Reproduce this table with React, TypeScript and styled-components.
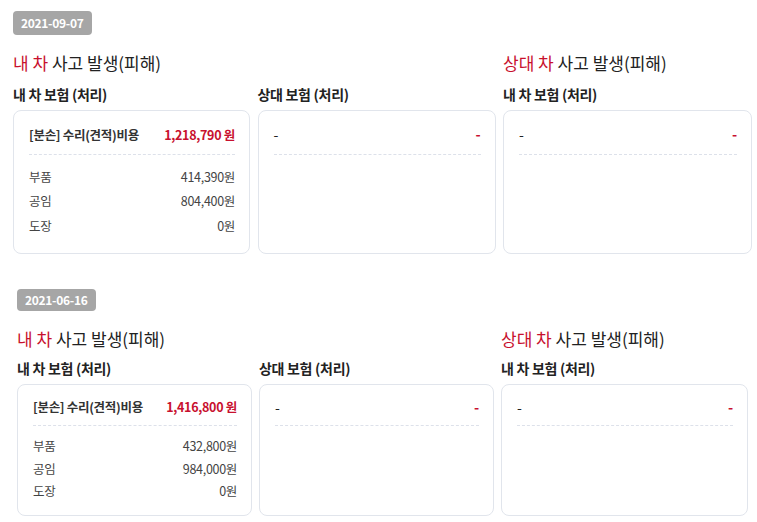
import styled, { createGlobalStyle } from "styled-components";

const GlobalStyle = createGlobalStyle`
  html, body {
    margin: 0;
    padding: 0;
    background: #ffffff;
  }
  body {
    font-family: "Noto Sans CJK KR", "Noto Sans", sans-serif;
    color: #222222;
  }
`;

const RED = "#c8102e";

const Page = styled.div`
  display: flex;
  flex-direction: column;
  gap: 35px;
  padding: 11px 0 0;
`;

const Section = styled.section<{ $left: number }>`
  display: flex;
  flex-direction: column;
  align-items: flex-start;
  padding-left: ${(p) => p.$left}px;
`;

const DateBadge = styled.div<{ $compact?: boolean }>`
  height: ${(p) => (p.$compact ? 22 : 24)}px;
  line-height: ${(p) => (p.$compact ? 22 : 24)}px;
  padding: 0 8px;
  border-radius: 4px;
  background-color: #a6a6a6;
  color: #ffffff;
  font-size: 12px;
  font-weight: bold;
  letter-spacing: -0.3px;
`;

const Columns = styled.div<{ $cols: string; $gap: number }>`
  display: grid;
  grid-template-columns: ${(p) => p.$cols};
  column-gap: ${(p) => p.$gap}px;
  margin-top: 16px;
`;

const Column = styled.div`
  display: flex;
  flex-direction: column;
`;

const Heading = styled.h2`
  margin: 0;
  height: 24px;
  line-height: 24px;
  font-size: 17px;
  font-weight: normal;
  color: #222222;
  white-space: nowrap;

  em {
    font-style: normal;
    color: ${RED};
  }
`;

const SubHeading = styled.h3<{ $compact?: boolean }>`
  margin: ${(p) => (p.$compact ? "7px 0 6px" : "9px 0 6px")};
  height: 20px;
  line-height: 20px;
  font-size: 14px;
  font-weight: bold;
  letter-spacing: -0.3px;
  color: #222222;
  white-space: nowrap;
`;

const Card = styled.div<{ $compact?: boolean }>`
  flex: 1;
  border: 1px solid #e1e5ec;
  border-radius: 8px;
  padding: 0 14px ${(p) => (p.$compact ? 13 : 15)}px 15px;
  display: flex;
  flex-direction: column;
`;

const CardHeader = styled.div<{ $compact?: boolean }>`
  display: flex;
  justify-content: space-between;
  align-items: center;
  height: 20px;
  padding: ${(p) => (p.$compact ? "12px 0 8px" : "13px 0 10px")};
  border-bottom: 1px dashed #dde1ea;
  font-size: 12.5px;
  font-weight: bold;
  letter-spacing: -0.3px;
  color: #333333;
`;

const Amount = styled.span<{ $empty?: boolean }>`
  color: ${RED};
  font-weight: bold;
  font-size: ${(p) => (p.$empty ? "14px" : "12.5px")};
`;

const Dash = styled.span`
  font-weight: normal;
  font-size: 14px;
  color: #222222;
`;

const ItemList = styled.div`
  display: flex;
  flex-direction: column;
  margin-top: 9px;
`;

const Item = styled.div<{ $compact?: boolean }>`
  display: flex;
  justify-content: space-between;
  align-items: center;
  height: ${(p) => (p.$compact ? 22.5 : 24.5)}px;
  font-size: 12.5px;
  letter-spacing: -0.3px;
  color: #444444;
`;

interface ICost {
  total: string;
  parts: { label: string; value: string }[];
}

interface IAccident {
  date: string;
  left: number;
  cols: string;
  gap: number;
  compact?: boolean;
  cost: ICost;
}

const accidents: IAccident[] = [
  {
    date: "2021-09-07",
    left: 13,
    cols: "237px 238px 249px",
    gap: 7.5,
    cost: {
      total: "1,218,790 원",
      parts: [
        { label: "부품", value: "414,390원" },
        { label: "공임", value: "804,400원" },
        { label: "도장", value: "0원" },
      ],
    },
  },
  {
    date: "2021-06-16",
    left: 17,
    cols: "235px 235px 247px",
    gap: 7,
    compact: true,
    cost: {
      total: "1,416,800 원",
      parts: [
        { label: "부품", value: "432,800원" },
        { label: "공임", value: "984,000원" },
        { label: "도장", value: "0원" },
      ],
    },
  },
];

function EmptyCard({ compact }: { compact?: boolean }) {
  return (
    <Card $compact={compact}>
      <CardHeader $compact={compact}>
        <Dash>-</Dash>
        <Amount $empty>-</Amount>
      </CardHeader>
    </Card>
  );
}

function AccidentBlock({ item }: { item: IAccident }) {
  const c = item.compact;
  return (
    <Section $left={item.left}>
      <DateBadge $compact={c}>{item.date}</DateBadge>
      <Columns $cols={item.cols} $gap={item.gap}>
        <Column>
          <Heading>
            <em>내 차</em> 사고 발생(피해)
          </Heading>
          <SubHeading $compact={c}>내 차 보험 (처리)</SubHeading>
          <Card $compact={c}>
            <CardHeader $compact={c}>
              <span>[분손] 수리(견적)비용</span>
              <Amount>{item.cost.total}</Amount>
            </CardHeader>
            <ItemList>
              {item.cost.parts.map((p) => (
                <Item key={p.label} $compact={c}>
                  <span>{p.label}</span>
                  <span>{p.value}</span>
                </Item>
              ))}
            </ItemList>
          </Card>
        </Column>
        <Column>
          <Heading />
          <SubHeading $compact={c}>상대 보험 (처리)</SubHeading>
          <EmptyCard compact={c} />
        </Column>
        <Column>
          <Heading>
            <em>상대 차</em> 사고 발생(피해)
          </Heading>
          <SubHeading $compact={c}>내 차 보험 (처리)</SubHeading>
          <EmptyCard compact={c} />
        </Column>
      </Columns>
    </Section>
  );
}

function App() {
  return (
    <>
      <GlobalStyle />
      <Page>
        {accidents.map((a) => (
          <AccidentBlock key={a.date} item={a} />
        ))}
      </Page>
    </>
  );
}

export default App;
